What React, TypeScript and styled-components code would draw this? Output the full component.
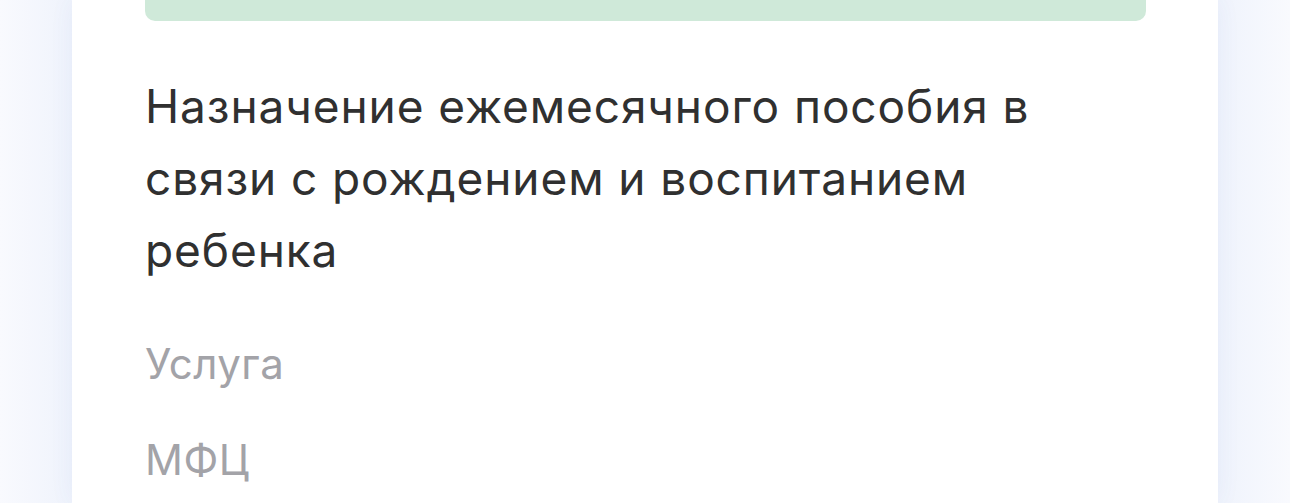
import styled, { createGlobalStyle } from "styled-components";

const GlobalStyle = createGlobalStyle`
  html, body {
    margin: 0;
    padding: 0;
    height: 100%;
  }

  body {
    background: #f8f9fd;
    font-family: Inter, "Noto Sans", sans-serif;
    overflow: hidden;
  }
`;

interface ServiceCardProps {
  title: string;
  kind: string;
  provider: string;
}

function ServiceCard({ title, kind, provider }: ServiceCardProps) {
  return (
    <Card>
      <StatusBar />
      <Title>{title}</Title>
      <Meta>{kind}</Meta>
      <Meta $last>{provider}</Meta>
    </Card>
  );
}

export default function App() {
  return (
    <>
      <GlobalStyle />
      <Page>
        <ServiceCard
          title="Назначение ежемесячного пособия в связи с рождением и воспитанием ребенка"
          kind="Услуга"
          provider="МФЦ"
        />
      </Page>
    </>
  );
}

const Page = styled.main`
  height: 503px;
  padding: 0 72px;
  box-sizing: border-box;
  background: linear-gradient(
    90deg,
    #f9fafe 0px,
    #eff3fc 72px,
    #eff3fc calc(100% - 72px),
    #f9fafe 100%
  );
`;

const Card = styled.section`
  height: 100%;
  box-sizing: border-box;
  background: #ffffff;
  padding: 0 72px 0 73px;
  box-shadow: 0 0 24px rgba(72, 96, 180, 0.06);
`;

const StatusBar = styled.div`
  height: 21px;
  border-radius: 0 0 10px 10px;
  background: #cfe9d9;
`;

const Title = styled.h1`
  margin: 49px 0 0;
  font-size: 46px;
  line-height: 72px;
  font-weight: 400;
  color: #303030;
  letter-spacing: 0.9px;
`;

const Meta = styled.p<{ $last?: boolean }>`
  margin: ${({ $last }) => ($last ? "40px 0 0" : "50px 0 0")};
  font-size: 42px;
  line-height: 56px;
  font-weight: 400;
  letter-spacing: 0.5px;
  color: #a3a3a8;
`;
